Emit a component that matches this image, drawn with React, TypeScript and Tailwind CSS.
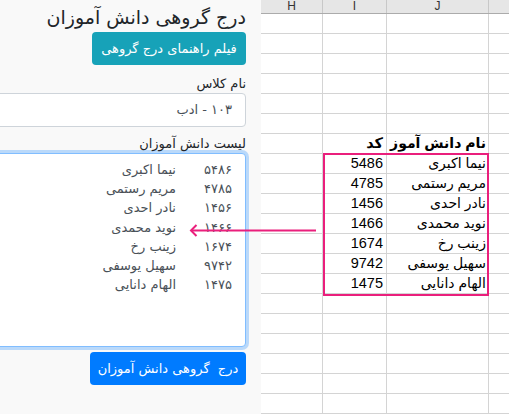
import React from "react";

const students = [
  { code: "۵۴۸۶", name: "نیما اکبری", xlCode: "5486" },
  { code: "۴۷۸۵", name: "مریم رستمی", xlCode: "4785" },
  { code: "۱۴۵۶", name: "نادر احدی", xlCode: "1456" },
  { code: "۱۴۶۶", name: "نوید محمدی", xlCode: "1466" },
  { code: "۱۶۷۴", name: "زینب رخ", xlCode: "1674" },
  { code: "۹۷۴۲", name: "سهیل یوسفی", xlCode: "9742" },
  { code: "۱۴۷۵", name: "الهام دانایی", xlCode: "1475" },
];

const font = "font-['DejaVu_Sans',sans-serif]";
const xlFont = "font-['Liberation_Sans','DejaVu_Sans',sans-serif]";

function Sheet() {
  const rows = Array.from({ length: 20 }, (_, i) => i);
  return (
    <div className={`flex-1 bg-white ${xlFont}`}>
      <div className="grid h-[14px] grid-cols-[62px_64px_102px_1fr] border-b border-[#ababab] bg-[#e6e6e6] text-[12px] leading-[13px] text-[#333]">
        <div className="border-r border-[#c8c8c8] text-center">H</div>
        <div className="border-r border-[#c8c8c8] text-center">I</div>
        <div className="border-r border-[#c8c8c8] text-center">J</div>
        <div />
      </div>
      {rows.map((r) => {
        const s = r >= 7 && r <= 13 ? students[r - 7] : null;
        const head = r === 6;
        return (
          <div
            key={r}
            dir="ltr"
            className="grid h-[20px] grid-cols-[62px_64px_102px_1fr] border-b border-[#d4d4d4] text-[14.5px] leading-[19px] text-black"
          >
            <div className="border-r border-[#d4d4d4]" />
            <div className={`border-r border-[#d4d4d4] pr-[3px] text-right ${head ? "font-bold" : ""}`}>
              {head ? "کد" : s?.xlCode}
            </div>
            <div
              dir="rtl"
              className={`border-r border-[#d4d4d4] pr-[2px] text-right whitespace-nowrap ${head ? "text-[14px] font-bold" : "text-[14px]"}`}
            >
              {head ? "نام دانش آموز" : s?.name}
            </div>
            <div />
          </div>
        );
      })}
    </div>
  );
}

export default function App() {
  return (
    <div className="relative flex h-[414px] w-[509px] overflow-hidden bg-[#f9f9f9]">
      <div dir="rtl" className={`w-[261px] shrink-0 overflow-hidden pr-[15px] ${font} text-[#212529]`}>
        <div className="w-[270px]">
          <h1 className="pt-[4px] text-[19px] leading-[26px]">درج گروهی دانش آموزان</h1>
          <button
            type="button"
            className="mt-[2px] block h-[33px] w-[154px] whitespace-nowrap rounded-[4px] bg-[#17a2b8] text-[13px] text-white"
          >
            فیلم راهنمای درج گروهی
          </button>
          <div className="mt-[10px] text-[13px] leading-[17px]">نام کلاس</div>
          <div className="mt-[1px] flex h-[34px] items-center rounded-[4px] border border-[#ced4da] bg-white pr-[13px] text-[13px] text-[#495057]">
            ۱۰۳ - ادب
          </div>
          <div className="mt-[8px] text-[13px] leading-[17px]">لیست دانش آموزان</div>
          <div className="mt-[1px] h-[194px] rounded-[4px] border border-[#80bdff] bg-white pr-[13px] pt-[6px] text-[13px] leading-[19.2px] text-[#495057] shadow-[0_0_0_3px_rgba(0,123,255,0.25)]">
            {students.map((s) => (
              <div key={s.code} className="flex whitespace-nowrap">
                <span className="w-[56px] shrink-0">{s.code}</span>
                <span>{s.name}</span>
              </div>
            ))}
          </div>
          <button
            type="button"
            className="mt-[5px] block h-[33px] w-[156px] whitespace-nowrap rounded-[4px] bg-[#007bff] text-[13px] text-white"
          >
            درج &nbsp;گروهی دانش آموزان
          </button>
        </div>
      </div>
      <Sheet />

      <div className="pointer-events-none absolute left-[323px] top-[153px] h-[143px] w-[166px] border-2 border-[#ea1f7c]" />
      <svg className="pointer-events-none absolute left-0 top-0" width="509" height="414">
        <path d="M191 230.5 H316" stroke="#ea1f7c" strokeWidth="2" fill="none" />
        <path d="M196.5 225 L191 230.5 L196.5 236" stroke="#ea1f7c" strokeWidth="2" fill="none" />
      </svg>
    </div>
  );
}
